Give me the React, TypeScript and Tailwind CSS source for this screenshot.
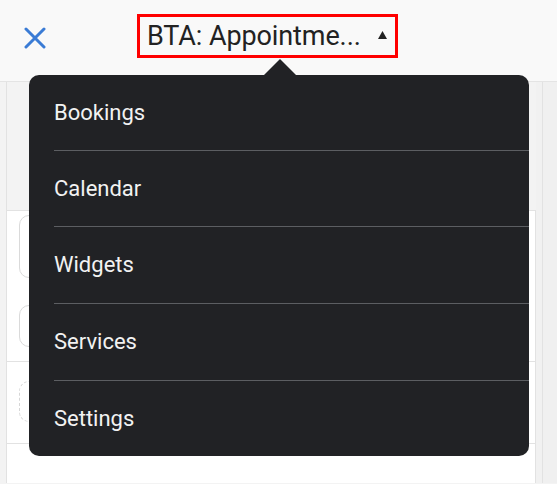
import React from "react";

const items = ["Bookings", "Calendar", "Widgets", "Services", "Settings"];
const heights = ["h-[76px]", "h-[76px]", "h-[77px]", "h-[77px]"];

export default function App() {
  return (
    <div
      className="relative w-[557px] h-[484px] overflow-hidden bg-[#f3f3f3]"
      style={{ fontFamily: "Roboto, 'Noto Sans', sans-serif" }}
    >
      {/* Header */}
      <div className="h-[82px] bg-[#f9f9f9] border-b border-[#e4e4e4] flex items-start">
        <div className="ml-[24px] mt-[27px] w-[22px] h-[22px]">
          <svg width="22" height="22" viewBox="0 0 22 22">
            <path d="M2 2 L20 20 M20 2 L2 20" stroke="#3a7bd5" strokeWidth="3" strokeLinecap="round" />
          </svg>
        </div>
        <div className="ml-[91px] mt-[14px] w-[261px] h-[44px] border-[3px] border-[#ff0000] flex items-center pl-[7px]">
          <span className="text-[27px] leading-none text-[#222222] tracking-[-0.1px]">BTA: Appointme...</span>
          <svg className="ml-[17px] mt-[-2px]" width="9" height="8" viewBox="0 0 9 8">
            <polygon points="4.5,0 9,8 0,8" fill="#222222" />
          </svg>
        </div>
      </div>

      {/* Body */}
      <div className="flex h-[401px]">
        <div className="w-[7px] border-r border-[#e2e2e2]" />
        <div className="w-[529px] flex flex-col">
          <div className="h-[128px]" />
          <div className="flex-1 bg-white border-t border-r border-[#e2e2e2] flex flex-col">
            <div className="px-[12px] pt-[4px]">
              <div className="h-[63px] rounded-[10px] border border-[#dadada]" />
              <div className="mt-[27px] h-[42px] rounded-[10px] border border-[#dadada]" />
            </div>
            <div className="mt-[14px] border-t border-[#e2e2e2]" />
            <div className="px-[12px] pt-[19px]">
              <div className="h-[41px] rounded-[10px] border border-dashed border-[#d6d6d6]" />
            </div>
            <div className="mt-[21px] border-t border-[#e2e2e2]" />
          </div>
        </div>
        <div className="w-[7px] bg-[#f1f1f1] border-r border-[#e2e2e2]" />
        <div className="flex-1 bg-[#f0f0f0]" />
      </div>

      {/* Arrow */}
      <div className="absolute left-[264px] top-[59px]">
        <svg width="32" height="17" viewBox="0 0 32 17">
          <polygon points="16,0 32,16 32,17 0,17 0,16" fill="#212225" />
        </svg>
      </div>

      {/* Menu */}
      <div className="absolute left-[29px] top-[75px] w-[500px] h-[381px] rounded-[10px] bg-[#212225] flex flex-col overflow-hidden">
        {items.map((it, i) => (
          <div
            key={it}
            className={
              i < items.length - 1
                ? heights[i] + " ml-[25px] border-b border-[#5c5e62] flex items-center"
                : "flex-1 ml-[25px] flex items-center"
            }
          >
            <span className="text-[22px] leading-none text-[#f2f2f2]">{it}</span>
          </div>
        ))}
      </div>
    </div>
  );
}
